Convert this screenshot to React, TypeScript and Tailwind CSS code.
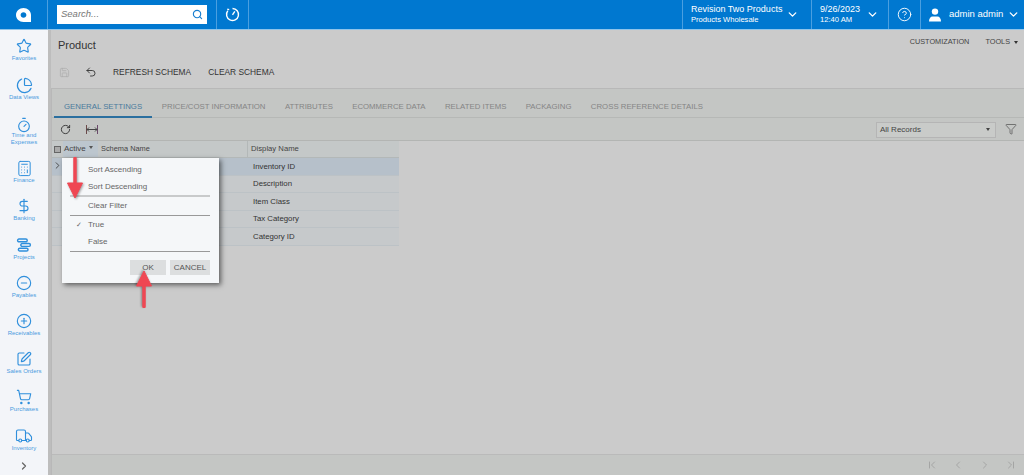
import {
  Calculator,
  ChevronDown,
  ChevronFirst,
  ChevronLast,
  ChevronLeft,
  ChevronRight,
  CircleHelp,
  CircleMinus,
  CirclePlus,
  DollarSign,
  Filter,
  PieChart,
  RotateCw,
  Save,
  Search,
  ShoppingCart,
  SquarePen,
  Star,
  Timer,
  Truck,
  Undo2,
} from 'lucide-react';
import type { ReactNode } from 'react';

function ProjectsIcon() {
  return (
    <svg width="16" height="16" viewBox="0 0 20 20" fill="none" stroke="currentColor" strokeWidth="1.8">
      <rect x="2" y="2.500" width="12" height="3.500" rx="1.700" />
      <rect x="6" y="8.200" width="12" height="3.500" rx="1.700" />
      <rect x="3" y="14" width="12" height="3.500" rx="1.700" />
    </svg>
  );
}

function Logo() {
  return (
    <svg width="15" height="14" viewBox="0 0 15 14">
      <path
        fillRule="evenodd"
        fill="#fff"
        d="M7.500 0C11.600 0 15 3.100 15 7v7H7.500C3.400 14 0 10.900 0 7S3.400 0 7.500 0ZM7.500 4.200C5.900 4.200 4.600 5.400 4.600 7s1.300 2.800 2.900 2.800 2.900-1.200 2.900-2.800-1.300-2.800-2.900-2.800Z"
      />
    </svg>
  );
}

function RecentIcon() {
  return (
    <svg width="15" height="15" viewBox="0 0 15 15" fill="none" stroke="#fff" strokeWidth="1.400">
      <path d="M7.500 1.500a6 6 0 1 1-4.700 2.300" />
      <path d="M7.500 7.800 9.800 4.300" />
      <path d="M2.300 2.300 4.200 2.600" />
    </svg>
  );
}

function UserIcon() {
  return (
    <svg width="14" height="14" viewBox="0 0 14 14" fill="#fff">
      <circle cx="7" cy="3.600" r="3.200" />
      <path d="M1 13.500c0-3 1.500-5 3.500-5h5c2 0 3.500 2 3.500 5Z" />
    </svg>
  );
}

function RedArrow({ up, height }: { up?: boolean; height: number }) {
  const base = height - 16;
  return (
    <svg
      width="18"
      height={height}
      viewBox={`0 0 18 ${height}`}
      className={`drop-shadow-[1px_1px_1px_rgba(0,0,0,0.35)] ${up ? 'rotate-180' : ''}`}
    >
      <path d={`M9 1.500V${base + 1}`} stroke="#ef4753" strokeWidth="3.500" strokeLinecap="round" />
      <path d={`M1.500 ${base}H16.500L9 ${height - 1}Z`} fill="#ef4753" stroke="#ef4753" strokeLinejoin="round" />
    </svg>
  );
}

const navItems: { label: ReactNode; icon: ReactNode; h: string }[] = [
  { label: 'Favorites', icon: <Star size={16} strokeWidth={1.700} />, h: 'h-[39px]' },
  { label: 'Data Views', icon: <PieChart size={17} strokeWidth={1.700} />, h: 'h-[40px]' },
  { label: <span className="relative -top-[2px]">Time and<br />Expenses</span>, icon: <Timer size={16} strokeWidth={1.700} />, h: 'h-[43px]' },
  { label: 'Finance', icon: <Calculator size={17} strokeWidth={1.400} />, h: 'h-[38px]' },
  { label: 'Banking', icon: <DollarSign size={16} strokeWidth={1.700} />, h: 'h-[39px]' },
  { label: 'Projects', icon: <ProjectsIcon />, h: 'h-[38px]' },
  { label: 'Payables', icon: <CircleMinus size={16} strokeWidth={1.700} />, h: 'h-[38px]' },
  { label: 'Receivables', icon: <CirclePlus size={16} strokeWidth={1.700} />, h: 'h-[38px]' },
  { label: 'Sales Orders', icon: <SquarePen size={16} strokeWidth={1.700} />, h: 'h-[38px]' },
  { label: 'Purchases', icon: <ShoppingCart size={16} strokeWidth={1.700} />, h: 'h-[39px]' },
  { label: 'Inventory', icon: <Truck size={18} strokeWidth={1.500} />, h: 'h-[33px]' },
];

const tabs = [
  'GENERAL SETTINGS',
  'PRICE/COST INFORMATION',
  'ATTRIBUTES',
  'ECOMMERCE DATA',
  'RELATED ITEMS',
  'PACKAGING',
  'CROSS REFERENCE DETAILS',
];

const rows = ['Inventory ID', 'Description', 'Item Class', 'Tax Category', 'Category ID'];

function TopBar() {
  return (
    <div className="flex h-[30px] shrink-0 items-stretch border-b border-[#8fc4ea] bg-[#0078d0] text-white">
      <div className="flex w-[48px] items-center justify-center border-r border-[#4a9fe0]">
        <Logo />
      </div>
      <div className="flex w-[169px] items-center justify-center border-r border-[#4a9fe0]">
        <div className="flex h-[19px] w-[150px] items-center justify-between bg-white px-[4px]">
          <span className="text-[9.500px] italic text-[#777]">Search...</span>
          <Search size={11} strokeWidth={2.500} className="text-[#1a7fd0]" />
        </div>
      </div>
      <div className="flex w-[32px] items-center justify-center border-r border-[#4a9fe0]">
        <RecentIcon />
      </div>
      <div className="flex-1" />
      <div className="flex w-[129px] items-center border-l border-[#4a9fe0] pl-[8px]">
        <div className="w-[95px]">
          <div className="text-[9px] leading-[11px]">Revision Two Products</div>
          <div className="text-[7.600px] leading-[10px]">Products Wholesale</div>
        </div>
        <ChevronDown size={13} strokeWidth={2.500} />
      </div>
      <div className="flex w-[77px] items-center border-l border-[#4a9fe0] pl-[8px]">
        <div className="w-[46px]">
          <div className="text-[9px] leading-[11px]">9/26/2023</div>
          <div className="text-[7.600px] leading-[10px]">12:40 AM</div>
        </div>
        <ChevronDown size={13} strokeWidth={2.500} />
      </div>
      <div className="flex w-[32px] items-center justify-center border-l border-[#4a9fe0]">
        <CircleHelp size={15} strokeWidth={1.500} />
      </div>
      <div className="flex w-[104px] items-center border-l border-[#4a9fe0] pl-[7px]">
        <UserIcon />
        <span className="ml-[7px] w-[58px] text-[9.500px]">admin admin</span>
        <ChevronDown size={13} strokeWidth={2.500} />
      </div>
    </div>
  );
}

function Sidebar() {
  return (
    <div className="flex w-[48px] shrink-0 flex-col items-center bg-[#f3f5f9] pt-[7px] text-[#2f8fdc]">
      {navItems.map((item, i) => (
        <div key={i} className={`flex ${item.h} w-full shrink-0 flex-col items-center`}>
          <div className="flex h-[18px] items-center">{item.icon}</div>
          <div className="whitespace-nowrap text-center text-[6px] leading-[7px] text-[#4a9be0]">{item.label}</div>
        </div>
      ))}
      <ChevronRight size={12} strokeWidth={2.500} className="text-[#666]" />
    </div>
  );
}

function FilterPopup() {
  return (
    <div className="absolute left-[62px] top-[158px] h-[125px] w-[157px] bg-[#f5f7f9] pl-[8px] pr-[9px] text-[8px] text-[#666] shadow-[2px_2px_5px_rgba(0,0,0,0.55)]">
      <div className="pl-[18px] pt-[3px] leading-[17px]">
        <div>Sort Ascending</div>
        <div>Sort Descending</div>
      </div>
      <div className="border-t-2 border-[#c8cacb]" />
      <div className="pl-[18px] leading-[17px]">Clear Filter</div>
      <div className="mt-[1px] border-t border-[#999]" />
      <div className="relative pl-[18px] leading-[17px]">
        <span className="absolute left-[6px] text-[7px]">✓</span>
        <div>True</div>
        <div>False</div>
      </div>
      <div className="mt-[1px] border-t border-[#999]" />
      <div className="mt-[8px] flex justify-end gap-[4px]">
        <button className="h-[15px] w-[36px] bg-[#dcdedf] text-[8px] text-[#555]">OK</button>
        <button className="h-[15px] w-[40px] bg-[#dcdedf] text-[8px] text-[#555]">CANCEL</button>
      </div>
    </div>
  );
}

function Main() {
  return (
    <div className="flex min-w-0 flex-1 flex-col border-l-[3px] border-[#bdbdbd] bg-[#cbcbcb]">
      <div className="flex h-[28px] shrink-0 items-center justify-between pl-[7px] pr-[5px]">
        <div className="pt-[3px] text-[11px] text-[#333]">Product</div>
        <div className="-mt-[4px] flex items-center text-[7.300px] text-[#444]">
          <span>CUSTOMIZATION</span>
          <span className="ml-[16px]">TOOLS</span>
          <span className="ml-[4px] mr-[1px] border-x-[2.500px] border-t-[3px] border-x-transparent border-t-[#333]" />
        </div>
      </div>
      <div className="flex h-[30px] shrink-0 items-center pb-[2px] pl-[8px] text-[8.400px] text-[#333]">
        <Save size={11} strokeWidth={1.500} className="text-[#aaa]" />
        <Undo2 size={12} strokeWidth={1.800} className="ml-[15px] text-[#333]" />
        <span className="ml-[16px]">REFRESH SCHEMA</span>
        <span className="ml-[17px]">CLEAR SCHEMA</span>
      </div>
      <div className="flex min-h-0 flex-1 flex-col border-l border-t border-[#b8b8b8]">
        <div className="flex h-[29px] shrink-0 border-b border-[#b6b8b6] bg-[#c4c6c4] pl-[2px] text-[7.800px] text-[#858585]">
          {tabs.map((t, i) => (
            <div
              key={t}
              className={
                i === 0
                  ? 'flex h-[29px] items-center border-b-[2px] border-[#2b6f9f] pl-[10px] pr-[10px] pt-[8px] text-[#4a7a9c]'
                  : 'flex items-center px-[9.700px] pt-[7px]'
              }
            >
              {t}
            </div>
          ))}
        </div>
        <div className="flex h-[23px] shrink-0 items-center border-b border-[#b3b5b3] bg-[#c4c6c4] pr-[7px]">
          <RotateCw size={11} strokeWidth={2} className="ml-[8px] text-[#333]" />
          <svg width="12" height="9" viewBox="0 0 12 9" className="ml-[15px]" fill="none" strokeWidth="1">
            <path d="M.5 0v9" stroke="#6b4a4a" />
            <path d="M11.500 0v9" stroke="#6b4a6b" />
            <path d="M1 4.500h10M3 2.500l-2 2 2 2M9 2.500l2 2-2 2" stroke="#444" />
          </svg>
          <div className="ml-auto mt-[1px] flex h-[16px] w-[120px] items-center justify-between border border-[#b5b5b5] bg-[#c9cbc9] pl-[3px] pr-[5px] text-[8px] text-[#444]">
            <span>All Records</span>
            <span className="border-x-[2px] border-t-[3px] border-x-transparent border-t-[#444]" />
          </div>
          <Filter size={12} strokeWidth={1.500} className="ml-[9px] text-[#555]" />
        </div>
        <div className="w-[347px] shrink-0">
          <div className="flex h-[17px] border-b border-[#b3b8b8] bg-[#c4c8c8] text-[8px] text-[#444]">
            <div className="flex w-[11px] items-center justify-center">
              <span className="h-[7px] w-[7px] border border-[#666] bg-[#aaa]" />
            </div>
            <div className="flex w-[35px] items-center bg-[#bcc6ce] pl-[1px]">
              Active
              <span className="ml-[3px] mb-[3px] border-x-[2px] border-t-[3px] border-x-transparent border-t-[#555]" />
            </div>
            <div className="flex w-[150px] items-center border-r border-[#b3b8b8] pl-[3px] text-[7.400px]">Schema Name</div>
            <div className="flex flex-1 items-center pl-[3px] text-[7.700px]">Display Name</div>
          </div>
          {rows.map((r, i) => (
            <div
              key={r}
              className={`flex h-[17.500px] items-center border-b border-[#bcc2c6] pt-[1px] text-[7.800px] text-[#333] ${
                i === 0 ? 'bg-[#b6c0ca]' : 'bg-[#c6c9cb]'
              }`}
            >
              <div className="flex w-[11px] justify-center">
                {i === 0 && <ChevronRight size={11} strokeWidth={2} className="-mt-[3px] text-[#444]" />}
              </div>
              <div className="w-[185px]" />
              <div className="pl-[5px]">{r}</div>
            </div>
          ))}
        </div>
        <div className="flex-1" />
        <div className="flex h-[21px] shrink-0 items-center justify-end gap-[14.500px] border-t border-[#bababa] bg-[#c4c6c4] pr-[7px] text-[#999]">
          <ChevronFirst size={12} strokeWidth={1.500} />
          <ChevronLeft size={12} strokeWidth={1.500} />
          <ChevronRight size={12} strokeWidth={1.500} />
          <ChevronLast size={12} strokeWidth={1.500} />
        </div>
      </div>
    </div>
  );
}

export default function App() {
  return (
    <div className="relative flex h-[475px] w-[1024px] flex-col overflow-hidden font-['Liberation_Sans',Arial,sans-serif]">
      <TopBar />
      <div className="flex min-h-0 flex-1">
        <Sidebar />
        <Main />
      </div>
      <FilterPopup />
      <div className="absolute left-[66px] top-[157px]">
        <RedArrow height={42} />
      </div>
      <div className="absolute left-[135px] top-[270px]">
        <RedArrow up height={38} />
      </div>
    </div>
  );
}
